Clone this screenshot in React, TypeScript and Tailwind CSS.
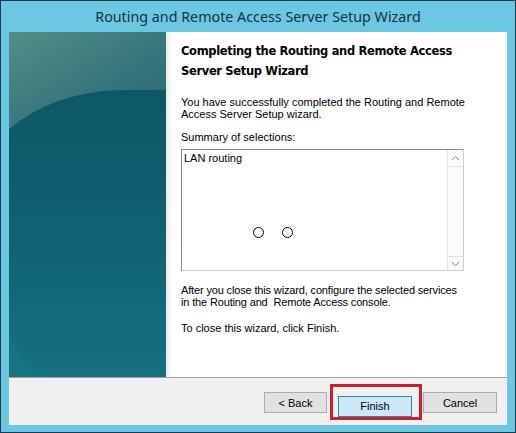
import React from 'react'

function PanelArt() {
  return (
    <svg width="157" height="345" viewBox="0 0 157 345" className="block">
      <defs>
        <linearGradient id="low" x1="0" y1="0" x2="0" y2="1">
          <stop offset="0" stopColor="#0c5363" />
          <stop offset="0.5" stopColor="#0f5f70" />
          <stop offset="1" stopColor="#15707f" />
        </linearGradient>
        <linearGradient id="top" x1="0" y1="0" x2="1" y2="1">
          <stop offset="0" stopColor="#528e87" />
          <stop offset="0.6" stopColor="#35747b" />
          <stop offset="1" stopColor="#2a6a74" />
        </linearGradient>
      </defs>
      <rect width="157" height="345" fill="url(#low)" />
      <path d="M0 0 H157 V58 H110 Q45 60 0 97 Z" fill="url(#top)" />
      <path d="M0 300 Q10 330 40 345 H0 Z" fill="#1a7786" opacity="0.5" />
    </svg>
  )
}

function Chevron({ up }: { up?: boolean }) {
  return (
    <svg width="9" height="6" viewBox="0 0 9 6">
      <path d={up ? 'M1 5 L4.5 1.5 L8 5' : 'M1 1 L4.5 4.5 L8 1'} fill="none" stroke="#8a8a8a" strokeWidth="1" />
    </svg>
  )
}

export default function App() {
  const body = "font-['Liberation_Sans',Arial,sans-serif] text-[11px] leading-[12px] text-black whitespace-nowrap"
  return (
    <div className="w-[516px] h-[433px] border border-[#1f3c4c] bg-[#6cc7e2] flex flex-col px-[8px] pb-[7px]">
      {/* title */}
      <div className="h-[31px] flex items-center justify-center font-['Noto_Sans',sans-serif] text-[14.3px] text-[#17323f]">
        Routing and Remote Access Server Setup Wizard
      </div>

      <div className="flex-1 flex flex-col bg-white">
        <div className="h-[345px] flex">
          <PanelArt />
          <div className="flex-1 pl-[15px] pt-[9px] shadow-[inset_7px_0_6px_-5px_rgba(0,0,0,0.12)]">
            <h1 className="font-['DejaVu_Sans',Tahoma,sans-serif] font-bold text-[11.5px] leading-[20px] text-black tracking-[-0.34px]">
              Completing the Routing and Remote Access
              <br />
              Server Setup Wizard
            </h1>

            <p className={`${body} mt-[15px]`}>
              You have successfully completed the Routing and Remote
              <br />
              Access Server Setup wizard.
            </p>

            <p className={`${body} mt-[11px]`}>Summary of selections:</p>

            {/* list box */}
            <div className="mt-[6px] w-[283px] h-[122px] flex border border-[#828790] border-r-[#d0d0d0] border-b-[#d0d0d0]">
              <div className="flex-1 relative px-[2px] pt-[2px]">
                <div className={body}>LAN routing</div>
                <div className="absolute left-[71px] top-[77px] w-[11px] h-[11px] rounded-full border border-black" />
                <div className="absolute left-[100px] top-[77px] w-[11px] h-[11px] rounded-full border border-black" />
              </div>
              <div className="w-[16px] flex flex-col border-l border-[#e2e2e2] bg-[#fbfbfb]">
                <div className="h-[17px] flex items-center justify-center border-b border-[#e2e2e2]">
                  <Chevron up />
                </div>
                <div className="flex-1" />
                <div className="h-[14px] flex items-center justify-center border-t border-[#e2e2e2]">
                  <Chevron />
                </div>
              </div>
            </div>

            <p className={`${body} mt-[13px] tracking-[-0.15px]`}>
              After you close this wizard, configure the selected services
              <br />
              in the Routing and&nbsp; Remote Access console.
            </p>

            <p className={`${body} mt-[14px]`}>To close this wizard, click Finish.</p>
          </div>
        </div>

        {/* footer */}
        <div className="flex-1 border-t border-[#a0a0a0] bg-[#f0f0f0] flex justify-end items-start pt-[14px] pr-[10px] gap-[11px]">
          <button className={`${body} w-[63px] h-[21px] border border-[#adadad] bg-[#e1e1e1]`}>&lt; Back</button>
          <div className="relative">
            <button className={`${body} w-[74px] h-[21px] border border-[#3c7fb1] bg-[#cde8f9]`}>Finish</button>
            <div className="absolute left-[-8px] top-[-8px] w-[92px] h-[36px] border-[3px] border-[#c8202c]" />
          </div>
          <button className={`${body} w-[74px] h-[21px] border border-[#adadad] bg-[#e1e1e1]`}>Cancel</button>
        </div>
      </div>
    </div>
  )
}
